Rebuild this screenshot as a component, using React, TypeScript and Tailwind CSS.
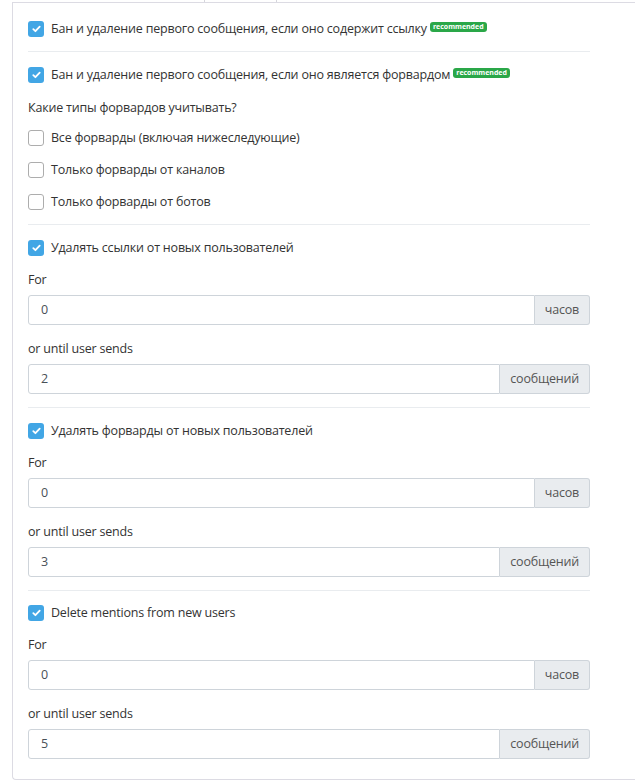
import React from 'react'

const font = { fontFamily: '"Open Sans", "Noto Sans", sans-serif' }

function Check({ checked, label, badge }: { checked: boolean; label: string; badge?: boolean }) {
  return (
    <div className="flex h-[20px] items-center">
      {checked ? (
        <span className="flex h-[16px] w-[16px] shrink-0 items-center justify-center rounded-[3px] bg-[#42a6e5]">
          <svg width="9" height="8" viewBox="0 0 9 8">
            <path d="M1.3 4.2 L3.4 6.2 L7.7 1.6" fill="none" stroke="white" strokeWidth="1.8" strokeLinecap="round" strokeLinejoin="round" />
          </svg>
        </span>
      ) : (
        <span className="h-[16px] w-[16px] shrink-0 rounded-[3px] border-[1.5px] border-[#adadad] bg-white" />
      )}
      <span className="ml-[7px] text-[12.5px] tracking-[-0.2px] text-[#333]">{label}</span>
      {badge && (
        <span className="ml-[3px] mt-[3px] self-start rounded-[3px] bg-[#2aa748] px-[3px] text-[7px] font-bold leading-[10px] text-white">
          recommended
        </span>
      )}
    </div>
  )
}

function Divider({ mt }: { mt: string }) {
  return <div className={`${mt} h-px bg-[#e9ecef]`} />
}

function Label({ text, mt }: { text: string; mt: string }) {
  return <div className={`${mt} h-[20px] text-[12.5px] leading-[20px] tracking-[-0.2px] text-[#333]`}>{text}</div>
}

function Field({ value, addon, mt }: { value: string; addon: string; mt: string }) {
  return (
    <div className={`${mt} flex h-[30px] text-[12.5px] tracking-[-0.2px]`}>
      <div className="flex flex-1 items-center rounded-l-[3px] border border-[#ced4da] bg-white pl-[12px] text-[#495057]">
        {value}
      </div>
      <div className="flex items-center rounded-r-[3px] border border-l-0 border-[#ced4da] bg-[#e9ecef] px-[10px] text-[#555]">
        {addon}
      </div>
    </div>
  )
}

function NewUsers({ title, msgs, mt }: { title: string; msgs: string; mt: string }) {
  return (
    <>
      <div className={mt}>
        <Check checked label={title} />
      </div>
      <Label text="For" mt="mt-[12px]" />
      <Field value="0" addon="часов" mt="mt-[5px]" />
      <Label text="or until user sends" mt="mt-[14px]" />
      <Field value={msgs} addon="сообщений" mt="mt-[5px]" />
    </>
  )
}

export default function App() {
  return (
    <div className="h-[782px] overflow-hidden bg-white" style={font}>
      {/* tab strip edge */}
      <div className="flex h-[2px]">
        <div className="w-[204px]" />
        <div className="w-[73px] border-x border-[#d6d6dc]" />
      </div>
      <div className="ml-[12px] w-[640px] rounded-bl-[4px] border-b border-l border-t border-[#dcdbe3] pb-[20px] pl-[15px]">
        <div className="w-[562px]">
          <div className="pt-[16px]">
            <Check checked label="Бан и удаление первого сообщения, если оно содержит ссылку" badge />
          </div>
          <Divider mt="mt-[12px]" />
          <div className="mt-[13px]">
            <Check checked label="Бан и удаление первого сообщения, если оно является форвардом" badge />
          </div>
          <Label text="Какие типы форвардов учитывать?" mt="mt-[13px]" />
          <div className="mt-[10px] flex flex-col gap-[12px]">
            <Check checked={false} label="Все форварды (включая нижеследующие)" />
            <Check checked={false} label="Только форварды от каналов" />
            <Check checked={false} label="Только форварды от ботов" />
          </div>
          <Divider mt="mt-[12px]" />
          <NewUsers title="Удалять ссылки от новых пользователей" msgs="2" mt="mt-[13px]" />
          <Divider mt="mt-[13px]" />
          <NewUsers title="Удалять форварды от новых пользователей" msgs="3" mt="mt-[13px]" />
          <Divider mt="mt-[13px]" />
          <NewUsers title="Delete mentions from new users" msgs="5" mt="mt-[12px]" />
        </div>
      </div>
    </div>
  )
}
